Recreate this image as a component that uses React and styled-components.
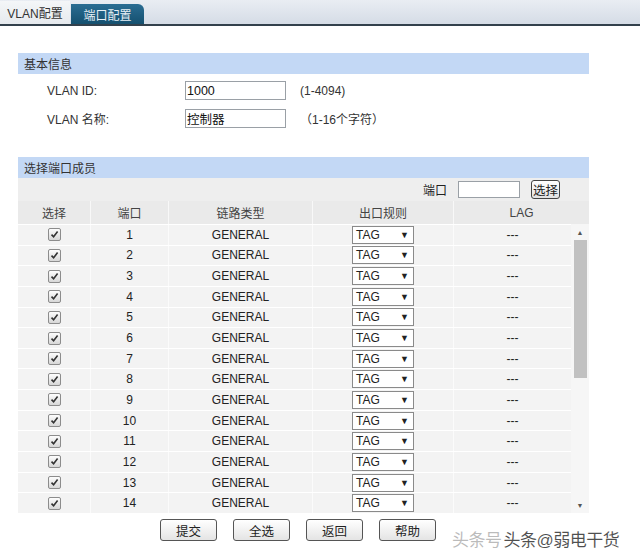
import React from 'react'
import styled, { createGlobalStyle } from 'styled-components';

const Global = createGlobalStyle`
  body{
    margin:0;
    background:#fff;
    font-family:"Liberation Sans","Noto Sans CJK SC",sans-serif;
    font-size:12px;
    color:#222;
  }
`

const Page = styled.div`
  width:640px;
  height:553px;
  overflow:hidden;
  position:relative;
`

const TabBar = styled.div`
  height:24px;
  display:flex;
  align-items:flex-end;
  background:linear-gradient(#e9edf3,#d5dce6);
  border-bottom:2px solid #33414c;
`

const Tab = styled.div`
  height:${p => p.active ? '23px' : '20px'};
  width:${p => p.w}px;
  display:flex;
  align-items:center;
  justify-content:center;
  font-size:12px;
  color:${p => p.active ? '#333' : '#e8f0f6'};
  background:${p => p.active ? 'linear-gradient(#f4f6f8,#e6eaee)' : 'linear-gradient(#2a6d93,#15506f)'};
  border-radius:${p => p.active ? '0' : '0 6px 0 0'};
  margin-left:${p => p.active ? '0' : '1px'};
`

const Content = styled.div`
  padding:27px 51px 0 18px;
`

const SectionHead = styled.div`
  height:21px;
  background:#c3d8f5;
  display:flex;
  align-items:center;
  padding-left:6px;
  color:#333;
`

const InfoRows = styled.div`
  padding:6px 0 28px 29px;
  display:flex;
  flex-direction:column;
  gap:7px;
`

const InfoRow = styled.div`
  display:flex;
  align-items:center;
  height:21px;
`

const Label = styled.div`
  width:138px;
  color:#333;
`

const TextBox = styled.div`
  width:101px;
  height:19px;
  border:1px solid #9aa0a6;
  box-sizing:border-box;
  display:flex;
  align-items:center;
  padding-left:1px;
  font-size:12.5px;
  color:#111;
`

const Hint = styled.div`
  margin-left:${p => p.ml}px;
  color:#333;
`

const SearchRow = styled.div`
  height:23px;
  background:#eeeeee;
  display:flex;
  align-items:center;
  justify-content:flex-end;
  padding-right:29px;
`

const SmallInput = styled.div`
  width:62px;
  height:17px;
  border:1px solid #9aa0a6;
  background:#fff;
  box-sizing:border-box;
  margin:0 11px 0 11px;
`

const SmallButton = styled.div`
  width:29px;
  height:19px;
  border:1px solid #444;
  border-radius:3px;
  box-sizing:border-box;
  background:linear-gradient(#ffffff,#e2e2e2);
  display:flex;
  align-items:center;
  justify-content:center;
  font-size:12.5px;
`

const cols = '72px 78px 144px 141px 136px'

const HeadRow = styled.div`
  display:grid;
  grid-template-columns:${cols};
  height:23px;
  background:#eaeaea;
`

const HeadCell = styled.div`
  display:flex;
  align-items:center;
  justify-content:center;
  color:#444;
  border-left:${p => p.first ? 'none' : '1px solid #f8f8f8'};
`

const BodyWrap = styled.div`
  display:flex;
  height:289px;
`

const Rows = styled.div`
  width:553px;
  display:flex;
  flex-direction:column;
`

const Row = styled.div`
  display:grid;
  grid-template-columns:72px 78px 144px 141px 118px;
  flex:1;
  background:#f3f3f3;
  border-top:1px solid #ffffff;
`

const Cell = styled.div`
  display:flex;
  align-items:center;
  justify-content:center;
  color:#222;
  border-left:${p => p.first ? 'none' : '1px solid #fbfbfb'};
`

const Check = styled.span`
  width:11px;
  height:11px;
  border:1px solid #8c8c8c;
  border-radius:2px;
  background:linear-gradient(#fdfdfd,#d7d7d7);
  display:flex;
  align-items:center;
  justify-content:center;
`

const Select = styled.div`
  width:62px;
  height:18px;
  box-sizing:border-box;
  border:1px solid #8a8a8a;
  background:#fff;
  display:flex;
  align-items:center;
  justify-content:space-between;
  padding:0 4px 0 3px;
  font-size:12px;
`

const Caret = styled.span`
  font-size:9px;
`

const Scrollbar = styled.div`
  width:18px;
  display:flex;
  flex-direction:column;
  align-items:center;
  background:#f6f6f6;
`

const Arrow = styled.div`
  height:16px;
  display:flex;
  align-items:center;
  justify-content:center;
  font-size:7px;
  color:#555;
`

const Thumb = styled.div`
  width:13px;
  height:138px;
  background:#c1c1c1;
`

const Spacer = styled.div`
  flex:1;
`

const Buttons = styled.div`
  display:flex;
  gap:16px;
  padding:6px 0 0 142px;
`

const Button = styled.div`
  width:57px;
  height:22px;
  box-sizing:border-box;
  border:1px solid #555;
  border-radius:3px;
  background:linear-gradient(#ffffff,#e4e4e4);
  display:flex;
  align-items:center;
  justify-content:center;
  font-size:12.5px;
  color:#222;
`

const Watermark = styled.div`
  position:absolute;
  left:452px;
  top:531px;
  font-size:17px;
  line-height:20px;
  color:rgba(120,120,120,0.5);
  letter-spacing:-0.5px;
  white-space:nowrap;
`

const WatermarkFront = styled.span`
  color:rgba(30,30,30,0.78);
  margin-left:2px;
`

const CheckMark = () => (
  <svg width="9" height="9" viewBox="0 0 9 9">
    <path d="M1.5 4.6 L3.6 6.8 L7.6 1.6" fill="none" stroke="#333" strokeWidth="1.6" />
  </svg>
)

const ports = Array.from({ length: 14 }, (_, i) => i + 1)

const App = () => {
  return (
    <Page>
      <Global />
      <TabBar>
        <Tab active w={70}>VLAN配置</Tab>
        <Tab w={73}>端口配置</Tab>
      </TabBar>
      <Content>
        <SectionHead>基本信息</SectionHead>
        <InfoRows>
          <InfoRow>
            <Label>VLAN ID:</Label>
            <TextBox>1000</TextBox>
            <Hint ml={14}>(1-4094)</Hint>
          </InfoRow>
          <InfoRow>
            <Label>VLAN 名称:</Label>
            <TextBox>控制器</TextBox>
            <Hint ml={14}>（1-16个字符）</Hint>
          </InfoRow>
        </InfoRows>
        <SectionHead>选择端口成员</SectionHead>
        <SearchRow>
          端口
          <SmallInput />
          <SmallButton>选择</SmallButton>
        </SearchRow>
        <HeadRow>
          <HeadCell first>选择</HeadCell>
          <HeadCell>端口</HeadCell>
          <HeadCell>链路类型</HeadCell>
          <HeadCell>出口规则</HeadCell>
          <HeadCell>LAG</HeadCell>
        </HeadRow>
        <BodyWrap>
          <Rows>
            {ports.map(n => (
              <Row key={n}>
                <Cell first><Check><CheckMark /></Check></Cell>
                <Cell>{n}</Cell>
                <Cell>GENERAL</Cell>
                <Cell>
                  <Select>TAG<Caret>▼</Caret></Select>
                </Cell>
                <Cell>---</Cell>
              </Row>
            ))}
          </Rows>
          <Scrollbar>
            <Arrow>▲</Arrow>
            <Thumb />
            <Spacer />
            <Arrow>▼</Arrow>
          </Scrollbar>
        </BodyWrap>
        <Buttons>
          <Button>提交</Button>
          <Button>全选</Button>
          <Button>返回</Button>
          <Button>帮助</Button>
        </Buttons>
      </Content>
      <Watermark>头条号<WatermarkFront>头条@弱电干货</WatermarkFront></Watermark>
    </Page>
  )
}

export default App;
